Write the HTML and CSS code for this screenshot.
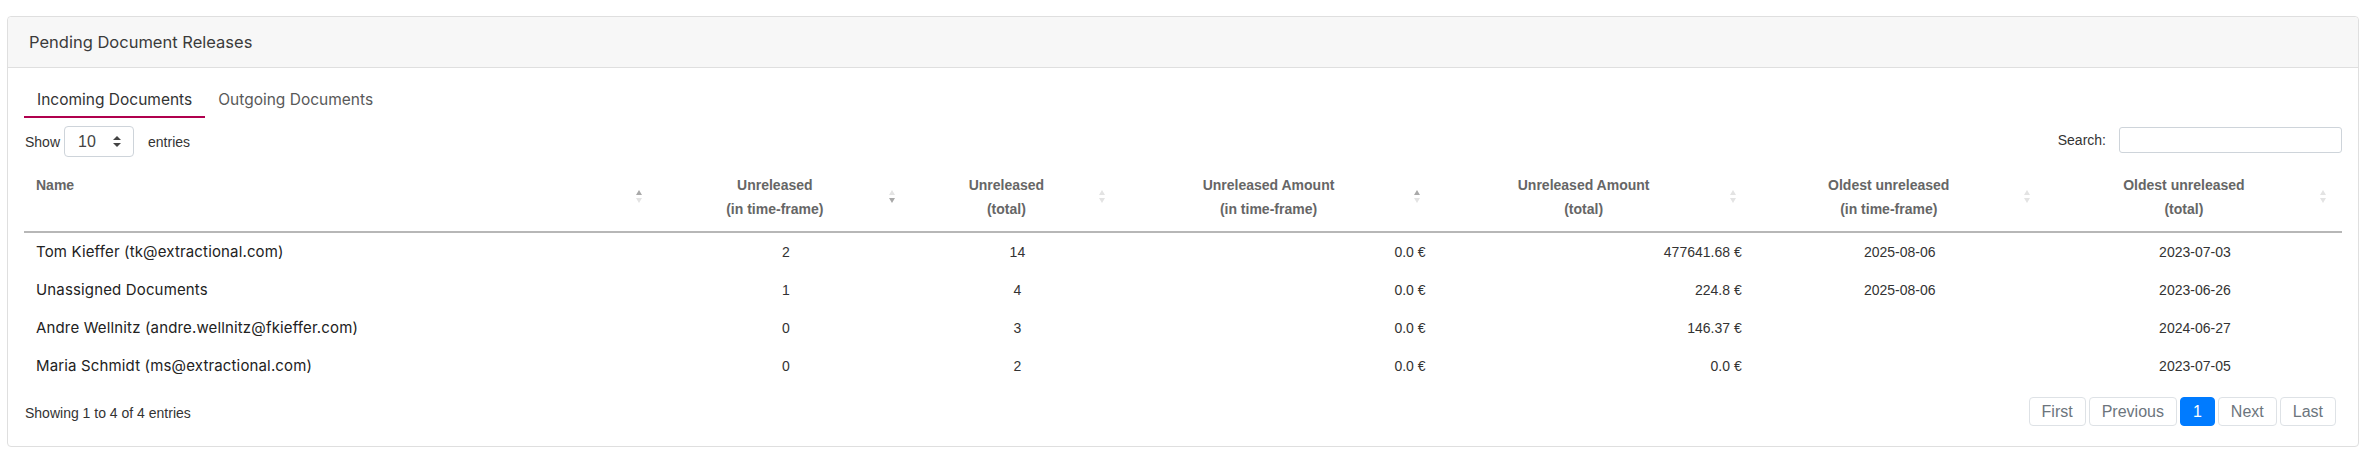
FILE: index.html
```html
<!DOCTYPE html>
<html lang="en">
<head>
<meta charset="utf-8">
<title>Pending Document Releases</title>
<link rel="stylesheet" href="styles.css">
</head>
<body>
<div class="page">
  <div class="card">
    <div class="card-header">Pending Document Releases</div>
    <div class="card-body">
      <nav class="tabs">
        <a class="tab active">Incoming Documents</a>
        <a class="tab">Outgoing Documents</a>
      </nav>
      <div class="dt-top">
        <div class="length">
          <span>Show</span>
          <span class="select"><span class="select-val">10</span>
            <svg class="select-arrow" width="8" height="11" viewBox="0 0 8 11"><path d="M4 0 L8 4 H0 Z M0 7 H8 L4 11 Z" fill="#444"/></svg>
          </span>
          <span>entries</span>
        </div>
        <div class="search">
          <span>Search:</span>
          <span class="search-input"></span>
        </div>
      </div>
      <table class="dt">
        <colgroup>
          <col class="w-name"><col class="w-c2"><col class="w-c3"><col class="w-c4"><col class="w-c5"><col class="w-c6"><col class="w-c7">
        </colgroup>
        <thead>
          <tr>
            <th><div class="th-inner"><span class="lbl lbl-left">Name</span><span class="sort asc"><i class="up"></i><i class="down"></i></span></div></th>
            <th><div class="th-inner"><span class="lbl">Unreleased<br>(in time-frame)</span><span class="sort desc"><i class="up"></i><i class="down"></i></span></div></th>
            <th><div class="th-inner"><span class="lbl">Unreleased<br>(total)</span><span class="sort"><i class="up"></i><i class="down"></i></span></div></th>
            <th><div class="th-inner"><span class="lbl">Unreleased Amount<br>(in time-frame)</span><span class="sort asc"><i class="up"></i><i class="down"></i></span></div></th>
            <th><div class="th-inner"><span class="lbl">Unreleased Amount<br>(total)</span><span class="sort"><i class="up"></i><i class="down"></i></span></div></th>
            <th><div class="th-inner"><span class="lbl">Oldest unreleased<br>(in time-frame)</span><span class="sort"><i class="up"></i><i class="down"></i></span></div></th>
            <th><div class="th-inner"><span class="lbl">Oldest unreleased<br>(total)</span><span class="sort"><i class="up"></i><i class="down"></i></span></div></th>
          </tr>
        </thead>
        <tbody>
          <tr>
            <td class="name">Tom Kieffer (tk@extractional.com)</td>
            <td class="ctr">2</td><td class="ctr">14</td>
            <td class="rgt">0.0 €</td><td class="rgt">477641.68 €</td>
            <td class="ctr">2025-08-06</td><td class="ctr">2023-07-03</td>
          </tr>
          <tr>
            <td class="name">Unassigned Documents</td>
            <td class="ctr">1</td><td class="ctr">4</td>
            <td class="rgt">0.0 €</td><td class="rgt">224.8 €</td>
            <td class="ctr">2025-08-06</td><td class="ctr">2023-06-26</td>
          </tr>
          <tr>
            <td class="name">Andre Wellnitz (andre.wellnitz@fkieffer.com)</td>
            <td class="ctr">0</td><td class="ctr">3</td>
            <td class="rgt">0.0 €</td><td class="rgt">146.37 €</td>
            <td class="ctr"></td><td class="ctr">2024-06-27</td>
          </tr>
          <tr>
            <td class="name">Maria Schmidt (ms@extractional.com)</td>
            <td class="ctr">0</td><td class="ctr">2</td>
            <td class="rgt">0.0 €</td><td class="rgt">0.0 €</td>
            <td class="ctr"></td><td class="ctr">2023-07-05</td>
          </tr>
        </tbody>
      </table>
      <div class="dt-bottom">
        <div class="info">Showing 1 to 4 of 4 entries</div>
        <ul class="pagination">
          <li class="page-btn">First</li>
          <li class="page-btn">Previous</li>
          <li class="page-btn active">1</li>
          <li class="page-btn">Next</li>
          <li class="page-btn">Last</li>
        </ul>
      </div>
    </div>
  </div>
</div>
</body>
</html>
```
FILE: styles.css
```css
* { box-sizing: border-box; }

body {
  margin: 0;
  background: #ffffff;
  font-family: "Liberation Sans", Arial, sans-serif;
  font-size: 14px;
  color: #333333;
}

.page {
  padding: 16px 7px;
}

.card {
  border: 1px solid #dfdfdf;
  border-radius: 4px;
  background: #ffffff;
}

.card-header {
  background: #f7f7f7;
  border-bottom: 1px solid #dfdfdf;
  border-radius: 4px 4px 0 0;
  padding: 13px 21px;
  font-family: Inter, "Noto Sans", sans-serif;
  font-size: 16.5px;
  line-height: 24px;
  color: #3b3b3b;
}

.card-body {
  padding: 16px 16px 20px;
}

.tabs {
  display: flex;
}

.tab {
  padding: 6px 13px;
  line-height: 20px;
  border-bottom: 2px solid transparent;
  font-family: Inter, "Noto Sans", sans-serif;
  font-size: 15.5px;
  color: #595959;
}

.tab.active {
  border-bottom-color: #b0004e;
  color: #333333;
}

.dt-top {
  display: flex;
  justify-content: space-between;
  align-items: center;
  margin-top: 8px;
  height: 31px;
}

.length {
  display: flex;
  align-items: center;
  padding-left: 1px;
}

.select {
  width: 70px;
  height: 31px;
  border: 1px solid #ced4da;
  border-radius: 4px;
  margin: 0 14px 0 4px;
  padding: 0 12px 0 13px;
  display: flex;
  align-items: center;
  justify-content: space-between;
  font-size: 16px;
  color: #444444;
}

.search {
  display: flex;
  align-items: center;
  margin-top: -4px;
}

.search-input {
  width: 223px;
  height: 26px;
  margin-left: 13px;
  border: 1px solid #ced4da;
  border-radius: 3px;
}

.dt {
  width: 100%;
  margin-top: 4px;
  border-collapse: collapse;
  table-layout: fixed;
}

.w-name { width: 634px; }
.w-c2 { width: 253px; }
.w-c3 { width: 210px; }
.w-c4 { width: 314px; }
.w-c5 { width: 316px; }
.w-c6 { width: 294px; }
.w-c7 { width: 296px; }

.dt th {
  padding: 12px 15px 10px 12px;
  border-bottom: 2px solid #b7b7b7;
  font-weight: bold;
  font-size: 14px;
  line-height: 24px;
  color: #666666;
  vertical-align: top;
}

.th-inner {
  display: flex;
  align-items: center;
  min-height: 48px;
}

.lbl {
  flex: 1;
  text-align: center;
  margin-right: 10px;
}

.lbl-left {
  text-align: left;
  align-self: flex-start;
}

.sort {
  display: flex;
  flex-direction: column;
  gap: 3px;
  width: 7px;
  margin-top: -2px;
}

.sort i {
  display: block;
  width: 0;
  height: 0;
  border-left: 3.5px solid transparent;
  border-right: 3.5px solid transparent;
}

.sort .up { border-bottom: 5px solid #e3e3e3; }
.sort .down { border-top: 5px solid #e3e3e3; }
.sort.asc .up { border-bottom-color: #a9a9a9; }
.sort.desc .down { border-top-color: #a9a9a9; }

.dt td {
  padding: 9px 10px 9px 12px;
  line-height: 20px;
  font-size: 14px;
  color: #333333;
}

.dt td.name {
  font-family: Inter, "Noto Sans", sans-serif;
  font-size: 15px;
  letter-spacing: 0.15px;
  color: #222222;
}

.ctr { text-align: center; }
.rgt { text-align: right; }

.dt-bottom {
  display: flex;
  justify-content: space-between;
  align-items: center;
  margin-top: 12px;
}

.info {
  padding-left: 1px;
  padding-top: 2px;
  color: #333333;
}

.pagination {
  display: flex;
  gap: 3px;
  margin: 0 6px 0 0;
  padding: 0;
  list-style: none;
}

.page-btn {
  padding: 4px 12px;
  font-size: 16px;
  line-height: 19px;
  border: 1px solid #dee2e6;
  border-radius: 4px;
  color: #6c757d;
  background: #ffffff;
}

.page-btn.active {
  background: #007bff;
  border-color: #007bff;
  color: #ffffff;
}
```
